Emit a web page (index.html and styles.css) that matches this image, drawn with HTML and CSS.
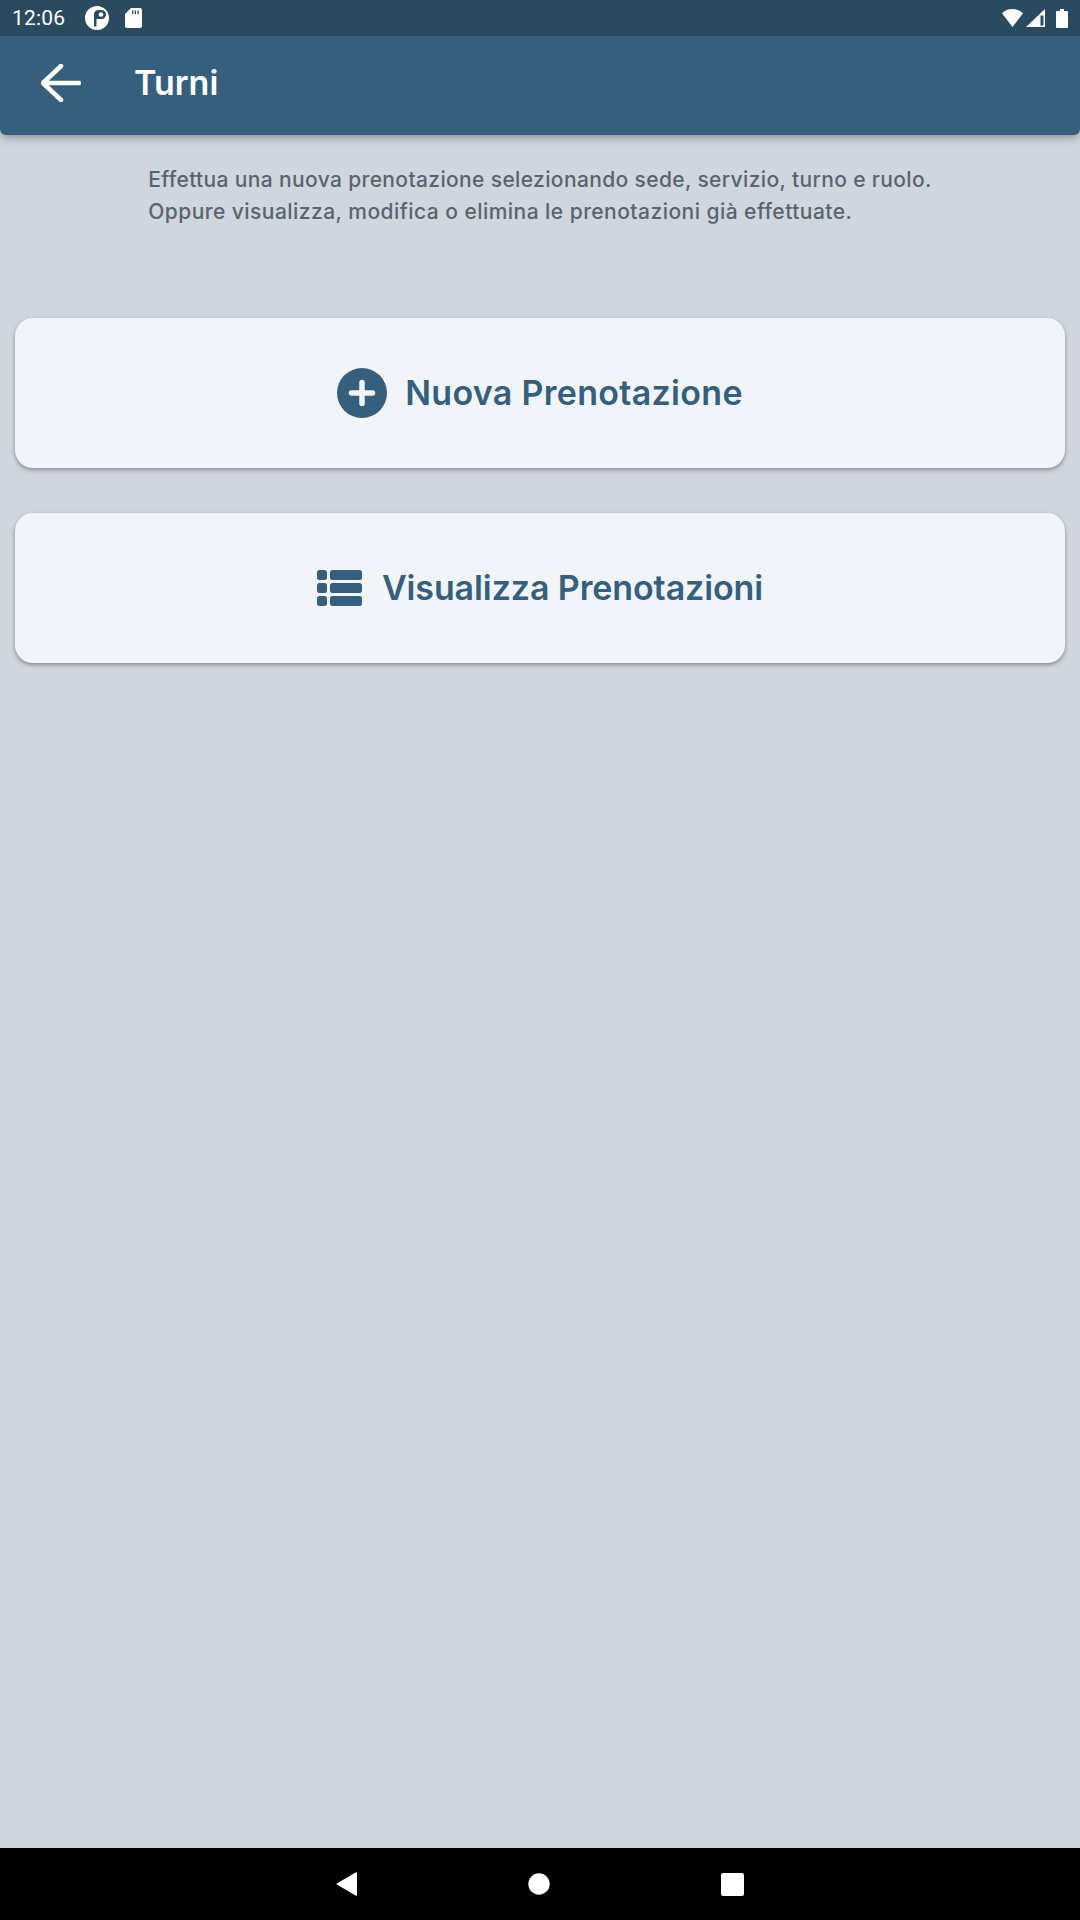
FILE: index.html
```html
<!DOCTYPE html>
<html>
<head>
    <title>Turni</title>
    <link rel="stylesheet" href="styles.css">
</head>
<body>
    <div class="screen">
        <header class="top">
            <div class="status-bar">
                <span class="clock">12:06</span>
                <svg class="status-icon" width="24" height="24" viewBox="0 0 24 24">
                    <circle cx="12" cy="12" r="12" fill="#fff"/>
                    <path fill="#2a4a60" d="M9 20.500V8.500A4.500 4.500 0 0 1 13.500 4H16.500a4.500 4.500 0 0 1 0 9H11.500v7.500z"/>
                    <circle cx="16" cy="8.500" r="2.300" fill="#fff"/>
                </svg>
                <svg class="status-icon sd" width="17" height="20" viewBox="0 0 17 20">
                    <path fill="#fff" fill-rule="evenodd" d="M6 0h9a2 2 0 0 1 2 2v16a2 2 0 0 1-2 2H2a2 2 0 0 1-2-2V6zM7 2.500v3.500h1.300V2.500zM9.700 2.500v3.500h1.300V2.500zM12.400 2.500v3.500h1.300V2.500z"/>
                </svg>
                <span class="status-right">
                    <svg class="wifi" width="21" height="18" viewBox="0 0 21 18"><path fill="#fff" d="M10.500 18 0 4.200C2.800 1.600 6.400 0 10.500 0s7.700 1.600 10.500 4.200z"/></svg>
                    <svg class="signal" width="19" height="18" viewBox="0 0 19 18"><path fill="#fff" fill-rule="evenodd" d="M19 0v18H0zM17.500 6.500H14.500V16.500h3z"/></svg>
                    <svg width="12" height="19" viewBox="0 0 12 19"><path fill="#fff" d="M4 0h4v2h3a1 1 0 0 1 1 1v15a1 1 0 0 1-1 1H1a1 1 0 0 1-1-1V3a1 1 0 0 1 1-1h3z"/></svg>
                </span>
            </div>
            <div class="app-bar">
                <svg class="back" width="40" height="38" viewBox="0 0 40 38">
                    <path fill="none" stroke="#fff" stroke-width="4.500" stroke-linecap="round" stroke-linejoin="round" d="M20 2 2 19l18 17M2 19h36"/>
                </svg>
                <h1>Turni</h1>
            </div>
        </header>

        <main class="content">
            <p class="intro">Effettua una nuova prenotazione selezionando sede, servizio, turno e ruolo.<br><span class="intro-second">Oppure visualizza, modifica o elimina le prenotazioni già effettuate.</span></p>

            <a class="action-card">
                <svg width="50" height="50" viewBox="0 0 50 50">
                    <circle cx="25" cy="25" r="25" fill="#365f7d"/>
                    <path fill="none" stroke="#f1f5f9" stroke-width="5.500" stroke-linecap="round" d="M25 14.500v21M14.500 25h21"/>
                </svg>
                <span>Nuova Prenotazione</span>
            </a>
            <a class="action-card action-card-list">
                <svg width="45" height="36" viewBox="0 0 45 36">
                    <g fill="#365f7d">
                        <rect x="0" y="0" width="10" height="10" rx="2.500"/>
                        <rect x="13" y="0" width="32" height="10" rx="2.500"/>
                        <rect x="0" y="13" width="10" height="10" rx="2.500"/>
                        <rect x="13" y="13" width="32" height="10" rx="2.500"/>
                        <rect x="0" y="26" width="10" height="10" rx="2.500"/>
                        <rect x="13" y="26" width="32" height="10" rx="2.500"/>
                    </g>
                </svg>
                <span>Visualizza Prenotazioni</span>
            </a>
        </main>

        <footer class="nav-bar">
            <svg width="21" height="24" viewBox="0 0 21 24"><path fill="#fff" d="M20 0.300a1 1 0 0 1 1 1v21.400a1 1 0 0 1-1.500.8L0 12z"/></svg>
            <svg width="22" height="22" viewBox="0 0 22 22"><circle cx="11" cy="11" r="10.700" fill="#fff"/></svg>
            <svg width="23" height="23" viewBox="0 0 23 23"><rect width="23" height="23" rx="2" fill="#fff"/></svg>
        </footer>
    </div>
</body>
</html>
```

FILE: styles.css
```css
body {
    margin: 0;
    font-family: Inter, "Liberation Sans", sans-serif;
    background-color: #cfd6de;
}
.screen {
    display: flex;
    flex-direction: column;
    height: 1920px;
    overflow: hidden;
}
.top {
    background-color: #365f7d;
    border-radius: 0 0 6px 6px;
    box-shadow: 0 3px 8px rgba(0, 0, 0, 0.3);
}
.status-bar {
    display: flex;
    align-items: center;
    height: 36px;
    padding: 0 12px;
    background-color: #2a4a60;
    color: white;
}
.clock {
    font-family: Roboto, sans-serif;
    font-size: 21px;
    letter-spacing: 0.2px;
    margin-right: 20px;
}
.status-icon {
    margin-right: 16px;
}
.status-icon.sd {
    margin-right: 0;
}
.status-right {
    display: flex;
    align-items: center;
    margin-left: auto;
}
.wifi {
    margin-right: 3px;
}
.signal {
    margin-right: 11px;
}
.app-bar {
    display: flex;
    align-items: center;
    height: 94px;
    padding: 0 0 5px 41px;
    color: white;
}
.app-bar h1 {
    margin: 0 0 2px 53px;
    font-size: 34px;
    font-weight: 600;
}
.content {
    flex: 1;
    display: flex;
    flex-direction: column;
    align-items: center;
    padding: 29px 15px 0;
}
.intro {
    margin: 0 0 90px;
    font-size: 21px;
    line-height: 32px;
    font-weight: 500;
    letter-spacing: 0.36px;
    color: #58646f;
}
.intro-second {
    letter-spacing: 0.46px;
}
.action-card {
    display: flex;
    align-items: center;
    justify-content: center;
    gap: 18px;
    width: 100%;
    height: 150px;
    margin-bottom: 45px;
    background-color: #f1f5f9;
    border-radius: 18px;
    box-shadow: 0 2px 4px rgba(0, 0, 0, 0.35);
    color: #365f7d;
    font-size: 34px;
    font-weight: 600;
    letter-spacing: 0.3px;
}
.action-card span {
    margin-bottom: 2px;
}
.action-card-list {
    gap: 20px;
    letter-spacing: -0.1px;
}
.nav-bar {
    display: flex;
    align-items: center;
    justify-content: center;
    gap: 171px;
    height: 72px;
    background-color: black;
}
```
